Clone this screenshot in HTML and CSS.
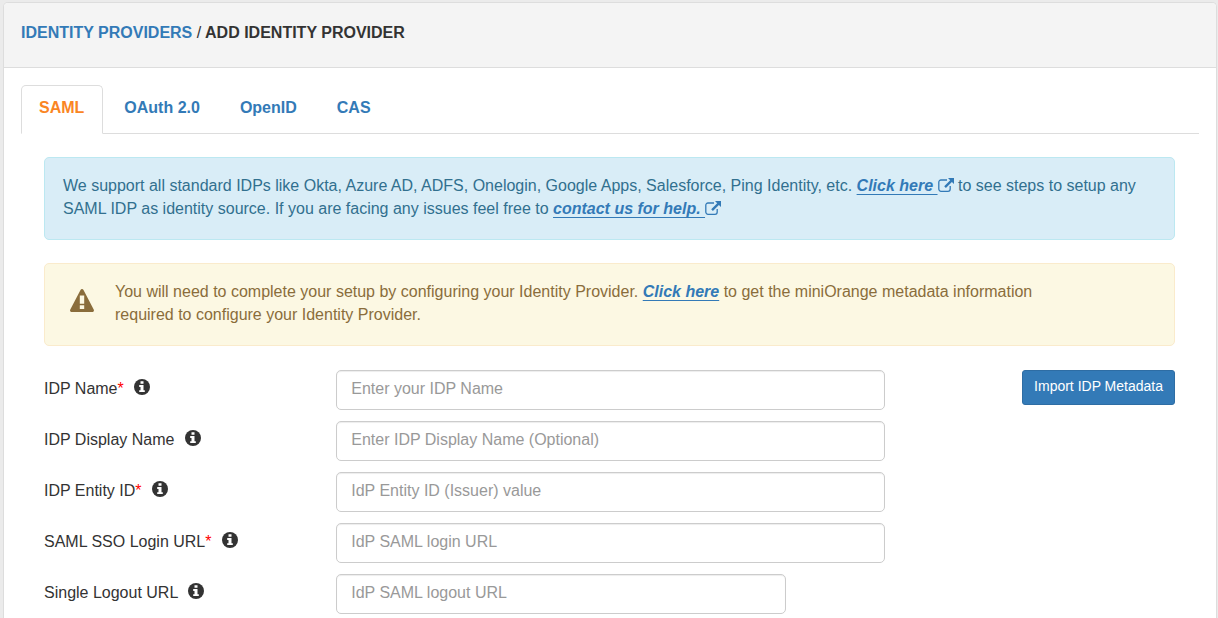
FILE: index.html
```html
<!DOCTYPE html>
<html lang="en">
<head>
    <meta charset="UTF-8">
    <meta name="viewport" content="width=device-width, initial-scale=1.0">
    <title>Add Identity Provider</title>
    <link rel="stylesheet" href="styles.css">
</head>
<body>
    <!-- Shared icons -->
    <svg class="sprite" aria-hidden="true">
        <symbol id="icon-info" viewBox="0 0 16 16">
            <circle cx="8" cy="8" r="8" fill="currentColor"/>
            <path fill="#fff" d="M6.5 2.3h3v2.4h-3zM5.2 6h4.3v5.2h1.3v1.9H5.2v-1.9h1.3V7.9H5.2z"/>
        </symbol>
        <symbol id="icon-external" viewBox="0 0 16 14">
            <path fill="none" stroke="currentColor" stroke-width="1.3" d="M9 2H3a2.2 2.2 0 0 0-2.2 2.2v6.9A2.2 2.2 0 0 0 3 13.3h7a2.2 2.2 0 0 0 2.2-2.2V8"/>
            <path fill="currentColor" d="M10 0h6v6l-2.1-2.1-6 6-1.7-1.7 6-6z"/>
        </symbol>
    </svg>

    <div class="panel">
        <div class="panel-heading">
            <a href="#">IDENTITY PROVIDERS</a> <span class="slash">/</span> ADD IDENTITY PROVIDER
        </div>

        <div class="panel-body">
            <nav class="tabs">
                <a class="tab active" href="#">SAML</a>
                <a class="tab" href="#">OAuth 2.0</a>
                <a class="tab" href="#">OpenID</a>
                <a class="tab" href="#">CAS</a>
            </nav>

            <div class="tab-content">
                <div class="alert alert-info">
                    We support all standard IDPs like Okta, Azure AD, ADFS, Onelogin, Google Apps, Salesforce, Ping Identity, etc. <a href="#"><span class="link-text">Click here </span><svg class="external"><use href="#icon-external"/></svg></a> to see steps to setup any SAML IDP as identity source. If you are facing any issues feel free to <a href="#"><span class="link-text">contact us for help. </span><svg class="external"><use href="#icon-external"/></svg></a>
                </div>

                <div class="alert alert-warning">
                    <svg class="warning-icon" viewBox="0 0 24 23" aria-hidden="true">
                        <path fill="currentColor" fill-rule="evenodd" d="M12 0q1 0 1.500.9l10.200 19.600q.6 1.200-.2 2-.4.500-1.200.5H1.700q-.8 0-1.200-.5-.8-.8-.2-2L10.500.9Q11 0 12 0zM9.800 6.500v8.200h4.400V6.500zM9.800 16.300v3.600h4.400v-3.600z"/>
                    </svg>
                    <p>You will need to complete your setup by configuring your Identity Provider. <a href="#"><span class="link-text">Click here</span></a> to get the miniOrange metadata information required to configure your Identity Provider.</p>
                </div>

                <form class="idp-form">
                    <div class="form-row">
                        <label for="idpName">IDP Name<span class="required">*</span> <svg class="info"><use href="#icon-info"/></svg></label>
                        <input type="text" id="idpName" placeholder="Enter your IDP Name">
                        <button type="button" class="btn-import">Import IDP Metadata</button>
                    </div>
                    <div class="form-row">
                        <label for="displayName">IDP Display Name <svg class="info"><use href="#icon-info"/></svg></label>
                        <input type="text" id="displayName" placeholder="Enter IDP Display Name (Optional)">
                    </div>
                    <div class="form-row">
                        <label for="entityId">IDP Entity ID<span class="required">*</span> <svg class="info"><use href="#icon-info"/></svg></label>
                        <input type="text" id="entityId" placeholder="IdP Entity ID (Issuer) value">
                    </div>
                    <div class="form-row">
                        <label for="loginUrl">SAML SSO Login URL<span class="required">*</span> <svg class="info"><use href="#icon-info"/></svg></label>
                        <input type="text" id="loginUrl" placeholder="IdP SAML login URL">
                    </div>
                    <div class="form-row">
                        <label for="logoutUrl">Single Logout URL <svg class="info"><use href="#icon-info"/></svg></label>
                        <input type="text" id="logoutUrl" class="short" placeholder="IdP SAML logout URL">
                    </div>
                </form>
            </div>
        </div>
    </div>
</body>
</html>
```
FILE: styles.css
```css
* {
    box-sizing: border-box;
}
body {
    display: flex;
    flex-direction: column;
    min-height: 100vh;
    margin: 0;
    padding: 2px 1px 0 3px;
    background: #ebebeb;
    color: #333;
    font-family: "Liberation Sans", Arial, sans-serif;
    font-size: 16px;
    line-height: 23px;
}
a {
    color: #337ab7;
    text-decoration: none;
}
.sprite {
    display: none;
}

/* Panel */
.panel {
    flex: 1;
    background: #fff;
    border: 1px solid #ddd;
    border-bottom: none;
    border-radius: 5px 5px 0 0;
}
.panel-heading {
    padding: 18px 17px 23px;
    background: #f4f4f4;
    border-bottom: 1px solid #ddd;
    border-radius: 4px 4px 0 0;
    font-weight: bold;
}
.slash {
    font-weight: normal;
}
.panel-body {
    padding: 17px 17px 4px;
}

/* Tabs */
.tabs {
    display: flex;
    gap: 3px;
    border-bottom: 1px solid #ddd;
}
.tab {
    margin-bottom: -1px;
    padding: 10px 18px 14px 17px;
    border: 1px solid transparent;
    border-radius: 5px 5px 0 0;
    font-weight: bold;
}
.tab.active {
    background: #fff;
    border-color: #ddd;
    border-bottom-color: #fff;
    color: #fa8524;
}
.tab-content {
    padding: 23px 24px 0 23px;
}

/* Alerts */
.alert {
    margin-bottom: 23px;
    padding: 16px 18px 19px;
    border: 1px solid;
    border-radius: 5px;
}
.alert-info {
    background: #d9edf7;
    border-color: #bce8f1;
    color: #31708f;
}
.alert-warning {
    display: flex;
    gap: 21px;
    padding-left: 25px;
    background: #fcf8e3;
    border-color: #faebcc;
    color: #8a6d3b;
}
.alert p {
    max-width: 950px;
    margin: 0;
}
.alert a {
    font-weight: bold;
    font-style: italic;
}
.link-text {
    text-decoration: underline;
    text-underline-offset: 3px;
}
.external {
    width: 16px;
    height: 14px;
    vertical-align: -1px;
}
.warning-icon {
    flex: none;
    width: 24px;
    height: 23px;
    margin-top: 9px;
}

/* Form */
.idp-form {
    display: grid;
    gap: 11px;
    padding-top: 1px;
}
.form-row {
    display: grid;
    grid-template-columns: 292fr 548fr 290fr;
    align-items: start;
}
.form-row label {
    padding-top: 7px;
}
.required {
    color: red;
}
.info {
    width: 16px;
    height: 16px;
    margin-left: 6px;
    vertical-align: -1px;
}
input {
    width: 100%;
    height: 40px;
    padding: 4px 14px 7px;
    border: 1px solid #ccc;
    border-radius: 5px;
    box-shadow: inset 0 1px 1px rgba(0, 0, 0, 0.075);
    color: #555;
    font: inherit;
}
input::placeholder {
    color: #999;
}
input.short {
    width: 82%;
}
.btn-import {
    justify-self: end;
    height: 35px;
    padding: 0 11px 3px;
    background: #337ab7;
    border: 1px solid #2e6da4;
    border-radius: 3px;
    color: #fff;
    font-family: inherit;
    font-size: 14px;
    cursor: pointer;
}
```
